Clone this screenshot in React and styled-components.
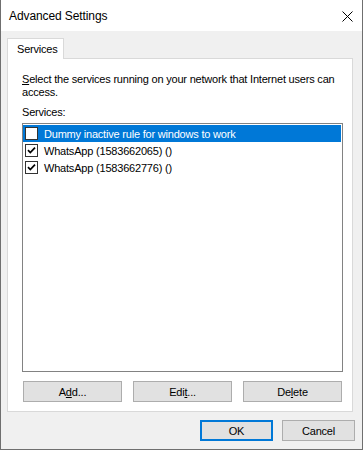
import styled, { createGlobalStyle } from "styled-components";

const GlobalStyle = createGlobalStyle`
  html, body {
    margin: 0;
    padding: 0;
    background: #f0f0f0;
  }
  * {
    box-sizing: border-box;
  }
`;

const services = [
  { id: 1, name: "Dummy inactive rule for windows to work", checked: false, selected: true },
  { id: 2, name: "WhatsApp (1583662065) ()", checked: true },
  { id: 3, name: "WhatsApp (1583662776) ()", checked: true },
];

const App = () => {
  return (
    <>
      <GlobalStyle />
      <Window>
        <TitleBar>
          <Title>Advanced Settings</Title>
          <CloseButton>
            <svg width="11" height="11" viewBox="0 0 11 11">
              <path d="M0.5 0.5L10.5 10.5M10.5 0.5L0.5 10.5" stroke="#000" strokeWidth="1" />
            </svg>
          </CloseButton>
        </TitleBar>
        <Body>
          <TabStrip>
            <Tab>Services</Tab>
          </TabStrip>
          <Panel>
            <Intro>
              <u>S</u>elect the services running on your network that Internet users can access.
            </Intro>
            <Label>Services:</Label>
            <ListBox>
              {services.map((s) => (
                <Row key={s.id} $selected={s.selected}>
                  <CheckBox>
                    {s.checked && (
                      <svg width="11" height="11" viewBox="0 0 11 11">
                        <path d="M2 5.2L4.3 7.6L9 2.6" fill="none" stroke="#000" strokeWidth="1.7" />
                      </svg>
                    )}
                  </CheckBox>
                  <RowText>{s.name}</RowText>
                </Row>
              ))}
            </ListBox>
            <ButtonRow>
              <Button>A<u>d</u>d...</Button>
              <Button>Edi<u>t</u>...</Button>
              <Button>De<u>l</u>ete</Button>
            </ButtonRow>
          </Panel>
          <Footer>
            <DialogButton $primary>OK</DialogButton>
            <DialogButton>Cancel</DialogButton>
          </Footer>
        </Body>
      </Window>
    </>
  );
};

export default App;

const Window = styled.div`
  width: 363px;
  height: 450px;
  display: flex;
  flex-direction: column;
  background: #f0f0f0;
  border: 1px solid #6f6f6f;
  border-top: none;
  font-family: "Liberation Sans", Arial, sans-serif;
  font-size: 11px;
  letter-spacing: -0.2px;
  color: #000;
`;

const TitleBar = styled.div`
  height: 31px;
  display: flex;
  align-items: center;
  justify-content: space-between;
  background: #fff;
  padding: 0 9px 0 8px;
`;

const Title = styled.div`
  font-size: 12px;
  letter-spacing: -0.1px;
`;

const CloseButton = styled.div`
  display: flex;
  align-items: center;
  margin-top: 1px;
`;

const Body = styled.div`
  flex: 1;
  display: flex;
  flex-direction: column;
  padding: 7px 9px 0 6px;
`;

const TabStrip = styled.div`
  display: flex;
`;

const Tab = styled.div`
  width: 57px;
  height: 21px;
  padding: 4px 0 0 9px;
  background: #fff;
  border: 1px solid #d9d9d9;
  border-bottom: none;
  margin-bottom: -1px;
  position: relative;
  z-index: 1;
`;

const Panel = styled.div`
  height: 354px;
  display: flex;
  flex-direction: column;
  background: #fff;
  border: 1px solid #d9d9d9;
  padding: 14px 9px 9px 14px;
`;

const Intro = styled.div`
  line-height: 13px;
`;

const Label = styled.div`
  margin-top: 7px;
  line-height: 13px;
`;

const ListBox = styled.div`
  margin-top: 4px;
  height: 249px;
  border: 1px solid #828282;
  background: #fff;
  padding: 1px 1px 0 0;
`;

const Row = styled.div`
  height: 17px;
  display: flex;
  align-items: center;
  padding-left: 2px;
  background: ${(p) => (p.$selected ? "#0078d7" : "transparent")};
  color: ${(p) => (p.$selected ? "#fff" : "#000")};
`;

const CheckBox = styled.div`
  width: 13px;
  height: 13px;
  border: 1px solid #333;
  background: #fff;
  display: flex;
  align-items: center;
  justify-content: center;
`;

const RowText = styled.span`
  margin-left: 6px;
`;

const ButtonRow = styled.div`
  display: flex;
  gap: 11px;
  margin-top: 9px;
  padding-left: 1px;
`;

const Button = styled.div`
  width: 99px;
  height: 21px;
  display: flex;
  align-items: center;
  justify-content: center;
  background: #e1e1e1;
  border: 1px solid #adadad;
`;

const Footer = styled.div`
  display: flex;
  justify-content: flex-end;
  gap: 9px;
  margin-top: 8px;
  margin-right: -2px;
`;

const DialogButton = styled.div`
  width: 73px;
  height: 21px;
  display: flex;
  align-items: center;
  justify-content: center;
  background: #e1e1e1;
  border: ${(p) => (p.$primary ? "2px solid #0078d7" : "1px solid #adadad")};
`;
